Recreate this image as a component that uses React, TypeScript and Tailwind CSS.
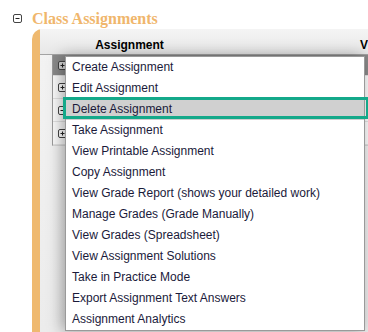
import { useState } from "react";

const menuItems = [
  "Create Assignment",
  "Edit Assignment",
  "Delete Assignment",
  "Take Assignment",
  "View Printable Assignment",
  "Copy Assignment",
  "View Grade Report (shows your detailed work)",
  "Manage Grades (Grade Manually)",
  "View Grades (Spreadsheet)",
  "View Assignment Solutions",
  "Take in Practice Mode",
  "Export Assignment Text Answers",
  "Assignment Analytics",
];

function ToggleBox({ open, fill = "#ffffff" }: { open: boolean; fill?: string }) {
  return (
    <svg width="9" height="9" viewBox="0 0 9 9" className="block">
      <rect x="0.5" y="0.5" width="8" height="8" rx="1.5" fill={fill} stroke="#444" />
      <path d="M2.5 4.5h4" stroke="#222" strokeWidth="1" />
      {!open && <path d="M4.5 2.5v4" stroke="#222" strokeWidth="1" />}
    </svg>
  );
}

const rows = [
  { h: "h-[21px]", bg: "bg-[#8a8a8a]", open: false, fill: "#d8d8d8" },
  { h: "h-[23px]", bg: "bg-[#fbfbfb]", open: false, fill: "#ffffff" },
  { h: "h-[23px]", bg: "bg-[#fbfbfb]", open: true, fill: "#ffffff" },
  { h: "h-[23px]", bg: "bg-[#fbfbfb]", open: false, fill: "#ffffff" },
];

export default function App() {
  const [active] = useState(2);

  return (
    <div className="relative w-[368px] h-[332px] overflow-hidden bg-white font-['Liberation_Sans',Arial,sans-serif]">
      {/* Section title */}
      <div className="flex items-center h-[28px] pt-[9px] pl-[13px]">
        <ToggleBox open />
        <h1 className="ml-[10px] text-[16px] leading-[20px] font-bold text-[#f0b66c] font-['Liberation_Serif','Times_New_Roman',serif]">
          Class Assignments
        </h1>
      </div>

      {/* Panel */}
      <div className="mt-[1px] ml-[32px] h-[303px] border-l-[8px] border-[#efb96f] rounded-tl-[10px] bg-gradient-to-b from-[#f3f3f3] to-[#ececec]">
        {/* Header */}
        <div className="flex h-[26px] border-b border-[#a3a3a3] bg-gradient-to-b from-[#f4f4f4] to-[#e8e8e8] pl-[12px]">
          <div className="w-[156px] pt-[9px] text-center text-[12px] leading-[15px] font-bold text-black">
            Assignment
          </div>
          <div className="w-[154px]" />
          <div className="pt-[9px] text-[12px] leading-[15px] font-bold text-black">V</div>
        </div>

        {/* Rows */}
        <div className="ml-[12px] border-l border-[#9a9a9a] border-b border-b-[#d6d6d6]">
          {rows.map((r, i) => (
            <div key={i} className={`flex items-center ${r.h} ${r.bg} pl-[5px] border-b border-[#e2e2e2]`}>
              <ToggleBox open={r.open} fill={r.fill} />
            </div>
          ))}
        </div>
      </div>

      {/* Context menu */}
      <div className="absolute left-[65px] top-[56px] w-[300px] bg-white border border-[#9a9a9a] shadow-[-3px_0_14px_rgba(0,0,0,0.35)]">
        {menuItems.map((item, i) => (
          <div
            key={item}
            className={`relative h-[21px] pl-[6px] text-[12px] leading-[21px] text-[#1a1a3a] whitespace-nowrap ${
              i === active ? "bg-[#d0d0d0]" : ""
            }`}
          >
            {i === active && (
              <span className="absolute -left-[3px] -right-[5px] -top-[2px] bottom-[1px] border-[3px] border-[#14a98a]" />
            )}
            <span className="relative">{item}</span>
          </div>
        ))}
      </div>
    </div>
  );
}
